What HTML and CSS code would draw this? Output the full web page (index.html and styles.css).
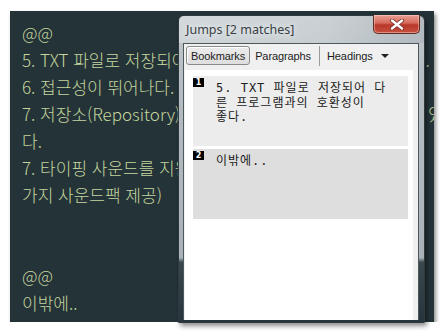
FILE: index.html
```html
<!DOCTYPE html>
<html lang="ko">
<head>
<meta charset="utf-8">
<link rel="stylesheet" href="styles.css">
</head>
<body>
<div class="stage">
  <div class="editor">
    <div class="line">@@</div>
    <div class="line">5. TXT 파일로 저장되어 다른 프로그램과의 호환성이 좋다.</div>
    <div class="line">6. 접근성이 뛰어나다. 어디서든 사용할 수 있다.</div>
    <div class="line">7. 저장소(Repository)를 이용하여 여러 파일을 관리할 수 있</div>
    <div class="line">다.</div>
    <div class="line">7. 타이핑 사운드를 지원한다. (여러 사운드 지원 선</div>
    <div class="line">가지 사운드팩 제공)</div>
    <div class="line">&nbsp;</div>
    <div class="line">&nbsp;</div>
    <div class="line">@@</div>
    <div class="line">이밖에..</div>
  </div>
</div>

<div class="jumps">
  <div class="title">Jumps [2 matches]</div>
  <div class="close">
    <svg width="16" height="11" viewBox="0 0 16 11">
      <path d="M3 1.5 L13 9.5 M13 1.5 L3 9.5" stroke="#7a2a22" stroke-width="4" stroke-linecap="round"/>
      <path d="M3 1.5 L13 9.5 M13 1.5 L3 9.5" stroke="#ffffff" stroke-width="2.4" stroke-linecap="round"/>
    </svg>
  </div>
  <div class="client">
    <div class="toolbar">
      <div class="tab active">Bookmarks</div>
      <div class="tab">Paragraphs</div>
      <div class="sep"></div>
      <div class="tab drop">Headings <span class="arrow"></span></div>
    </div>
    <div class="list">
      <div class="item first">
        <div class="badge">1</div>
        <div class="text">5. TXT 파일로 저장되어 다<br>른 프로그램과의 호환성이<br>좋다.</div>
      </div>
      <div class="item second">
        <div class="badge">2</div>
        <div class="text">이밖에..</div>
      </div>
    </div>
  </div>
</div>
</body>
</html>
```

FILE: styles.css
```css
html, body {
  margin: 0;
  padding: 0;
  background: #ffffff;
}

.stage {
  padding: 11px 0 0 10px;
}

.editor {
  width: 424px;
  height: 311px;
  box-sizing: border-box;
  background: #243338;
  padding: 8px 0 0 12px;
  box-shadow: 2px 3px 4px rgba(0, 0, 0, 0.45);
  overflow: hidden;
  font-family: "Noto Sans CJK KR", "Noto Sans", sans-serif;
  font-size: 17px;
  font-weight: 300;
  letter-spacing: 0;
  color: #c4d69e;
}

.line {
  height: 27px;
  line-height: 27px;
  white-space: nowrap;
}

.jumps {
  position: absolute;
  left: 178px;
  top: 15px;
  width: 247px;
  height: 308px;
  box-sizing: border-box;
  border: 1px solid #30393d;
  border-radius: 6px 6px 0 0;
  padding: 0 5px 2px 4px;
  display: flex;
  flex-direction: column;
  background: linear-gradient(to bottom, #c3cace 0%, #b6bec3 20%, #a9b2b7 79%, #3a484e 80.5%, #26353b 100%);
  box-shadow: 2px 3px 5px rgba(0, 0, 0, 0.45);
}

.title {
  height: 27px;
  display: flex;
  align-items: center;
  font-family: "Noto Sans", sans-serif;
  font-size: 12.5px;
  color: #3a4044;
  text-shadow: 0 0 5px #e8eef0, 0 0 8px #e8eef0;
  background: linear-gradient(to right, rgba(220, 225, 228, 0.6), rgba(235, 238, 240, 0.2) 60%, rgba(150, 160, 166, 0.3));
  margin: 0 -5px 0 -4px;
  padding-left: 7px;
  border-radius: 5px 5px 0 0;
}

.close {
  position: absolute;
  right: 4px;
  top: -1px;
  width: 47px;
  height: 19px;
  box-sizing: border-box;
  border: 1px solid #5e2a24;
  border-top: none;
  border-radius: 0 0 5px 5px;
  background: linear-gradient(to bottom, #e9a196 0%, #d5695b 45%, #b8372a 55%, #c8503f 100%);
  display: flex;
  align-items: center;
  justify-content: center;
  box-shadow: inset 0 0 0 1px rgba(255, 220, 210, 0.45);
}

.close svg {
  display: block;
}

.client {
  flex: 1;
  display: flex;
  flex-direction: column;
  background: #f0f0f0;
  border: 1px solid #4d585d;
  border-bottom: none;
}

.toolbar {
  height: 25px;
  box-sizing: border-box;
  padding: 2px 2px 0 2px;
  display: flex;
  align-items: flex-start;
  font-family: "Liberation Sans", sans-serif;
  font-size: 11px;
  letter-spacing: -0.1px;
  color: #1c1c1c;
}

.tab {
  height: 19px;
  box-sizing: border-box;
  padding: 0 3px;
  display: flex;
  align-items: center;
  border: 1px solid transparent;
  margin-right: 1px;
}

.tab.active {
  padding: 0 4px 0 4px;
  background: linear-gradient(to bottom, #ececec, #dedede);
  border: 1px solid #8a8a8a;
  border-radius: 3px;
  box-shadow: inset 1px 1px 0 #ffffff;
}

.sep {
  width: 1px;
  height: 20px;
  background: #9a9a9a;
  margin: 0 5px 0 3px;
}

.tab.drop {
  padding-left: 1px;
}

.arrow {
  display: inline-block;
  width: 0;
  height: 0;
  margin-left: 8px;
  border-left: 4px solid transparent;
  border-right: 4px solid transparent;
  border-top: 4px solid #222;
}

.list {
  flex: 1;
  background: #ffffff;
  margin: 1px 5px 0 1px;
  padding: 6px 5px 0 8px;
  display: flex;
  flex-direction: column;
  gap: 3px;
}

.item {
  height: 70px;
  display: flex;
  align-items: flex-start;
}

.item.first {
  background: #ececec;
}

.item.second {
  background: #dedede;
}

.badge {
  width: 11px;
  height: 9px;
  margin-top: 2px;
  background: #000000;
  color: #ffffff;
  font-family: "DejaVu Sans", sans-serif;
  font-weight: bold;
  font-size: 8px;
  line-height: 9px;
  text-align: center;
}

.text {
  margin-left: 12px;
  padding-top: 5px;
  font-family: "DejaVu Sans Mono", "Noto Sans CJK KR", monospace;
  font-size: 12px;
  letter-spacing: 1px;
  line-height: 14.5px;
  color: #202020;
  white-space: nowrap;
}
```
